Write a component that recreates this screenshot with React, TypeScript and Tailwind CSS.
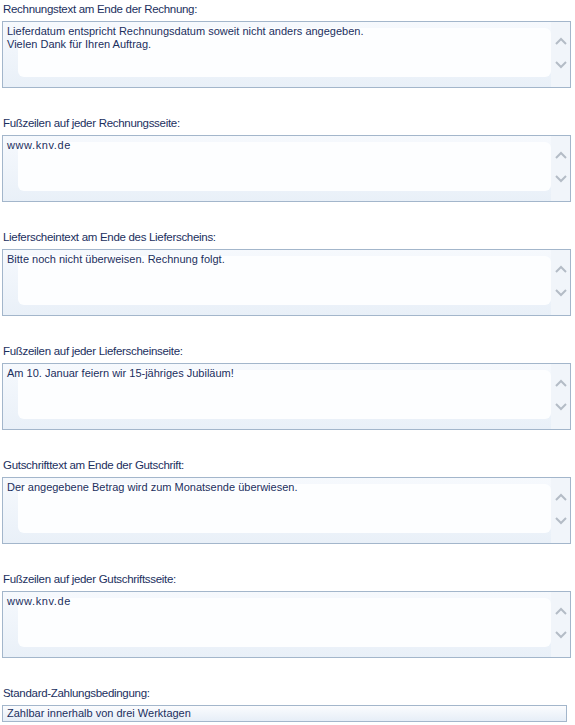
import React from "react";

const sections: { label: string; lines: string[] }[] = [
  {
    label: "Rechnungstext am Ende der Rechnung:",
    lines: [
      "Lieferdatum entspricht Rechnungsdatum soweit nicht anders angegeben.",
      "Vielen Dank für Ihren Auftrag.",
    ],
  },
  { label: "Fußzeilen auf jeder Rechnungsseite:", lines: ["www.knv.de"] },
  {
    label: "Lieferscheintext am Ende des Lieferscheins:",
    lines: ["Bitte noch nicht überweisen. Rechnung folgt."],
  },
  {
    label: "Fußzeilen auf jeder Lieferscheinseite:",
    lines: ["Am 10. Januar feiern wir 15-jähriges Jubiläum!"],
  },
  {
    label: "Gutschrifttext am Ende der Gutschrift:",
    lines: ["Der angegebene Betrag wird zum Monatsende überwiesen."],
  },
  { label: "Fußzeilen auf jeder Gutschriftsseite:", lines: ["www.knv.de"] },
];

function Chevron({ up }: { up?: boolean }) {
  return (
    <svg width="12" height="8" viewBox="0 0 12 8" className="block">
      <path
        d={up ? "M1 7 L6 2 L11 7" : "M1 1 L6 6 L11 1"}
        fill="none"
        stroke="#b4bcc6"
        strokeWidth="2"
      />
    </svg>
  );
}

function TextBox({ lines }: { lines: string[] }) {
  return (
    <div className="flex h-[67px] border border-[#a3b6cb] bg-[#eef3f9]">
      <div className="relative flex-1 bg-gradient-to-b from-[#f6f9fd] to-[#e9f0f8]">
        <div className="absolute left-[15px] top-[6px] right-0 bottom-[10px] rounded-[6px] bg-[#fdfeff]" />
        <div className="relative pl-[4px] pt-[3px] text-[11px] leading-[13px] text-[#1b2f5e]">
          {lines.map((l, i) => (
            <div key={i} className={l.startsWith("www") ? "tracking-[0.6px]" : ""}>
              {l}
            </div>
          ))}
        </div>
      </div>
      <div className="flex w-[19px] flex-col items-center bg-[#f1f5fa] pt-[15px]">
        <Chevron up />
        <div className="h-[16px]" />
        <Chevron />
      </div>
    </div>
  );
}

export default function App() {
  return (
    <div
      className="min-h-[725px] w-[575px] bg-white pl-[2px] pr-[4px]"
      style={{ fontFamily: '"Liberation Sans", Arial, sans-serif' }}
    >
      {sections.map((s, i) => (
        <div key={i} className="mb-[26px]">
          <div className="h-[21px] pl-[1px] pt-[1px] text-[11.5px] leading-[16px] tracking-[-0.3px] text-[#1b2f5e]">
            {s.label}
          </div>
          <TextBox lines={s.lines} />
        </div>
      ))}
      <div>
        <div className="h-[21px] pl-[1px] pt-[1px] text-[11.5px] leading-[16px] tracking-[-0.3px] text-[#1b2f5e]">
          Standard-Zahlungsbedingung:
        </div>
        <div className="mr-[4px] h-[17px] border border-[#a3b6cb] bg-gradient-to-b from-[#fbfcfe] to-[#e6eef7] pl-[4px] text-[11px] leading-[15px] text-[#1b2f5e]">
          Zahlbar innerhalb von drei Werktagen
        </div>
      </div>
    </div>
  );
}
